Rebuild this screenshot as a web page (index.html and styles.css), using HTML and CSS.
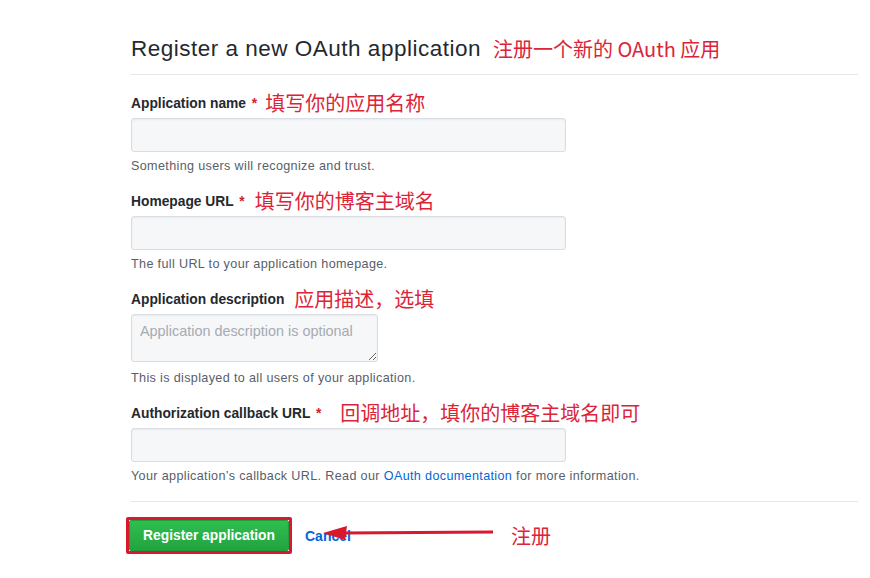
FILE: index.html
```html
<!DOCTYPE html>
<html lang="zh">
<head>
<meta charset="utf-8">
<title>Register a new OAuth application</title>
<link rel="stylesheet" href="styles.css">
</head>
<body>
<div class="page">
  <div class="subhead">
    <h2 class="title">Register a new OAuth application</h2>
    <span class="note-red note-head">注册一个新的 OAuth 应用</span>
  </div>

  <form class="form">
    <div class="field">
      <div class="label-row">
        <label class="label">Application name <span class="req">*</span></label>
        <span class="note-red note-1">填写你的应用名称</span>
      </div>
      <input class="input" type="text">
      <p class="hint">Something users will recognize and trust.</p>
    </div>

    <div class="field">
      <div class="label-row">
        <label class="label">Homepage URL <span class="req">*</span></label>
        <span class="note-red note-2">填写你的博客主域名</span>
      </div>
      <input class="input" type="text">
      <p class="hint">The full URL to your application homepage.</p>
    </div>

    <div class="field">
      <div class="label-row">
        <label class="label">Application description</label>
        <span class="note-red note-3">应用描述，选填</span>
      </div>
      <textarea class="textarea" placeholder="Application description is optional"></textarea>
      <p class="hint hint-ta">This is displayed to all users of your application.</p>
    </div>

    <div class="field">
      <div class="label-row">
        <label class="label">Authorization callback URL <span class="req">*</span></label>
        <span class="note-red note-4">回调地址，填你的博客主域名即可</span>
      </div>
      <input class="input" type="text">
      <p class="hint">Your application’s callback URL. Read our <a class="link" href="#">OAuth documentation</a> for more information.</p>
    </div>

    <div class="actions">
      <span class="highlight"><button class="btn-primary" type="button">Register application</button></span>
      <a class="cancel" href="#">Cancel</a>
      <span class="note-red note-submit">注册</span>
      <svg class="arrow" width="180" height="16" viewBox="0 0 180 16">
        <line x1="20" y1="8" x2="170" y2="7" stroke="#d9182d" stroke-width="3"/>
        <polygon points="0,8 24,1 22,15" fill="#d9182d"/>
      </svg>
    </div>
  </form>
</div>
</body>
</html>
```

FILE: styles.css
```css
* { box-sizing: border-box; }
html, body { margin: 0; padding: 0; background: #fff; }
body {
  font-family: "Liberation Sans", Arial, "Noto Sans CJK SC", sans-serif;
  color: #24292e;
}
.page {
  width: 858px;
  padding: 34px 0 0 131px;
}
.subhead {
  display: flex;
  align-items: center;
  height: 30px;
  box-sizing: content-box;
  border-bottom: 1px solid #e4e6e9;
  margin-bottom: 18px;
  padding-bottom: 10px;
}
.title {
  margin: 0;
  font-size: 22.5px;
  font-weight: 400;
  letter-spacing: 0.5px;
  line-height: 30px;
  color: #24292e;
}
.note-red {
  font-family: "Noto Sans CJK SC", sans-serif;
  color: #dc2438;
  font-size: 20px;
  line-height: 24px;
}
.note-head { margin-left: 12px; }
.note-1 { margin-left: 0; }
.note-2 { margin-left: 2px; }
.note-3 { margin-left: 2px; }
.note-4 { margin-left: 11px; }
.form { display: flex; flex-direction: column; }
.field {
  display: flex;
  flex-direction: column;
  align-items: flex-start;
  margin-bottom: 16px;
}
.label-row {
  display: flex;
  align-items: center;
  height: 20px;
  margin-bottom: 5px;
}
.label {
  font-size: 13.8px;
  font-weight: 700;
  color: #24292e;
  margin-right: 8px;
}
.req { color: #cb2431; font-weight: 700; margin-left: 2px; }
.input {
  width: 435px;
  height: 34px;
  background: #f6f7f9;
  border: 1px solid #dadde1;
  border-radius: 3px;
  box-shadow: inset 0 1px 2px rgba(27,31,35,.06);
  margin: 0;
}
.textarea {
  width: 247px;
  height: 48px;
  background: #f6f7f9;
  border: 1px solid #dadde1;
  border-radius: 3px;
  box-shadow: inset 0 1px 2px rgba(27,31,35,.06);
  padding: 8px 8px;
  font-family: "Liberation Sans", Arial, sans-serif;
  font-size: 14.4px;
  margin: 0;
  resize: both;
}
.textarea::placeholder { color: #a5abb1; }
.hint {
  margin: 5px 0 0;
  font-size: 12.6px;
  letter-spacing: 0.35px;
  line-height: 18px;
  color: #586069;
}
.hint-ta { margin-top: 7px; }
.link { color: #0366d6; text-decoration: none; }
.actions {
  position: relative;
  display: flex;
  align-items: center;
  border-top: 1px solid #e4e6e9;
  padding-top: 15px;
  width: 727px;
}
.highlight {
  display: inline-flex;
  border: 3px solid #d9182d;
  border-radius: 2px;
  margin-left: -5px;
}
.btn-primary {
  width: 160px;
  height: 31px;
  border: 1px solid #1e9f3e;
  border-radius: 2px;
  background: linear-gradient(#2fbe50, #22a43f);
  color: #fff;
  font-family: "Liberation Sans", Arial, sans-serif;
  font-size: 13.8px;
  font-weight: 700;
  padding: 0;
}
.cancel {
  margin-left: 13px;
  color: #0366d6;
  font-size: 14px;
  font-weight: 700;
  text-decoration: none;
}
.note-submit { margin-left: 160px; }
.arrow {
  position: absolute;
  left: 192px;
  top: 23px;
}
```
